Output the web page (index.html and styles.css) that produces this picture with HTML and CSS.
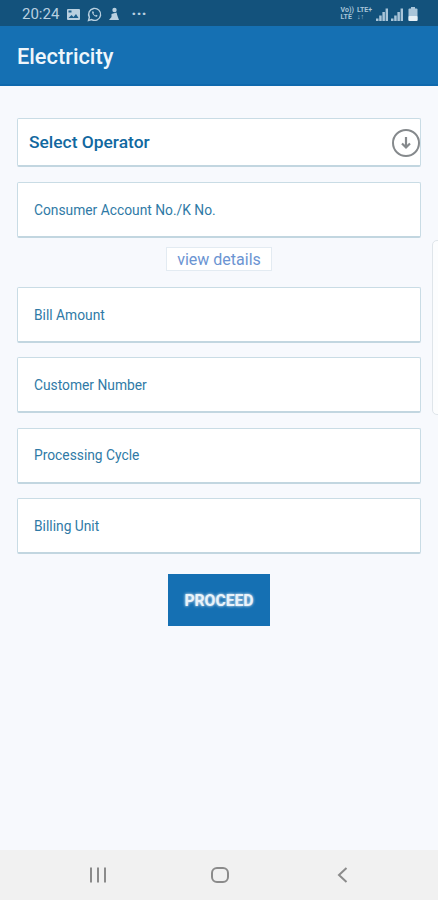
FILE: index.html
```html
<!DOCTYPE html>
<html lang="en">
<head>
    <meta charset="UTF-8">
    <meta name="viewport" content="width=device-width, initial-scale=1.0">
    <title>Electricity</title>
    <link rel="stylesheet" href="styles.css">
</head>
<body>
    <div class="phone">
        <div class="status-bar">
            <div class="status-left">
                <span class="clock">20:24</span>
                <svg class="status-icon" width="13" height="11" viewBox="0 0 13 11">
                    <rect x="0" y="0" width="13" height="11" rx="1" fill="#b9d0e0"/>
                    <path d="M1.500 9 L4.500 6 L6.500 8 L9 5 L11.500 9 Z" fill="#1d5f8c"/>
                    <rect x="1.500" y="1.500" width="3" height="2" fill="#1d5f8c"/>
                </svg>
                <svg class="status-icon" width="15" height="15" viewBox="0 0 15 15">
                    <path d="M1.500 13.500 L2.400 10.300 A6 6 0 1 1 4.700 12.600 Z" fill="none" stroke="#b9d0e0" stroke-width="1.400"/>
                    <path d="M5.200 4.600 C4.400 6.600 7.600 10.200 10 9.800 L10.600 8.600 L9 7.800 L8.300 8.400 C7.400 8 6.800 7.200 6.500 6.400 L7 5.800 L6.200 4.200 Z" fill="#b9d0e0"/>
                </svg>
                <svg class="status-icon" width="10" height="14" viewBox="0 0 10 14">
                    <circle cx="5.500" cy="3" r="2.200" fill="#b9d0e0"/>
                    <path d="M2.500 7 L7.500 5.500 L8.500 9 L10 13 L0 13 L2.500 10 Z" fill="#b9d0e0"/>
                </svg>
                <span class="more-dots">&middot;&middot;&middot;</span>
            </div>
            <div class="status-right">
                <span class="net-label">Vo))<br>LTE</span>
                <span class="net-label net-label-wide">LTE+<br>↓↑</span>
                <svg class="signal" width="12" height="13" viewBox="0 0 12 13">
                    <path d="M0 10.500h2.500V13H0zM3.200 7.500h2.500V13H3.200zM6.400 4h2.500v9H6.400zM9.600 0.500H12V13H9.600z" fill="#a9c5d9"/>
                </svg>
                <svg class="signal" width="12" height="13" viewBox="0 0 12 13">
                    <path d="M0 10.500h2.500V13H0zM3.200 7.500h2.500V13H3.200zM6.400 4h2.500v9H6.400zM9.600 0.500H12V13H9.600z" fill="#a9c5d9"/>
                </svg>
                <svg class="battery" width="10" height="14" viewBox="0 0 10 14">
                    <rect x="3" y="0" width="4" height="2" fill="#a9c5d9"/>
                    <rect x="0.500" y="1.500" width="9" height="12.500" rx="1" fill="#a9c5d9"/>
                    <rect x="0.500" y="9" width="9" height="5" rx="1" fill="#e6f0f6"/>
                </svg>
            </div>
        </div>

        <div class="app-bar">
            <h1>Electricity</h1>
        </div>

        <div class="content">
            <div class="side-tab"></div>

            <div class="field field-select">
                <span>Select Operator</span>
                <svg class="select-icon" width="30" height="30" viewBox="0 0 30 30">
                    <circle cx="15" cy="15" r="13" fill="#fff" stroke="#85898c" stroke-width="2"/>
                    <path d="M15 9v10M11 15.500l4 4 4-4" fill="none" stroke="#85898c" stroke-width="2.200"/>
                </svg>
            </div>

            <div class="field field-account">Consumer Account No./K No.</div>

            <div class="details-row">
                <span class="view-details">view details</span>
            </div>

            <div class="field">Bill Amount</div>
            <div class="field">Customer Number</div>
            <div class="field">Processing Cycle</div>
            <div class="field">Billing Unit</div>

            <button class="proceed-btn">PROCEED</button>
        </div>

        <div class="nav-bar">
            <svg width="18" height="16" viewBox="0 0 18 16">
                <path d="M2 0.500v15M9 0.500v15M16 0.500v15" stroke="#8b8b8b" stroke-width="2" fill="none"/>
            </svg>
            <svg width="18" height="16" viewBox="0 0 18 16">
                <rect x="1" y="1" width="16" height="14" rx="5" fill="none" stroke="#8b8b8b" stroke-width="2"/>
            </svg>
            <svg class="nav-back" width="12" height="16" viewBox="0 0 12 16">
                <path d="M10.500 1 L3 8 L10.500 15" fill="none" stroke="#8b8b8b" stroke-width="2"/>
            </svg>
        </div>
    </div>
</body>
</html>
```

FILE: styles.css
```css
body {
    font-family: Roboto, 'Liberation Sans', Arial, sans-serif;
    margin: 0;
    padding: 0;
    background: #f7f9fd;
}
.phone {
    width: 438px;
    height: 900px;
    display: flex;
    flex-direction: column;
    overflow: hidden;
}
.status-bar {
    height: 26px;
    background: #13527c;
    display: flex;
    justify-content: space-between;
    align-items: center;
    padding: 2px 20px 0 22px;
    color: #b9d0e0;
    box-sizing: border-box;
}
.status-left {
    display: flex;
    align-items: center;
    gap: 7px;
}
.clock {
    font-size: 15px;
    margin-right: 1px;
}
.more-dots {
    font-size: 17px;
    font-weight: 700;
    margin-left: 5px;
    line-height: 1;
}
.status-right {
    display: flex;
    align-items: center;
    gap: 3px;
}
.net-label {
    font-size: 7px;
    line-height: 7px;
    font-weight: 700;
    color: #a9c5d9;
}
.net-label-wide {
    margin-right: 1px;
}
.battery {
    margin-left: 2px;
}
.app-bar {
    height: 60px;
    background: #1570b3;
    border-bottom: 2px solid #0f69ad;
    box-sizing: border-box;
    display: flex;
    align-items: center;
    padding: 2px 0 0 17px;
}
.app-bar h1 {
    margin: 0;
    font-size: 21.800px;
    font-weight: 500;
    color: #eef6fb;
}
.content {
    position: relative;
    flex: 1;
    padding: 32px 17px 0 17px;
    display: flex;
    flex-direction: column;
    align-items: stretch;
}
.side-tab {
    position: absolute;
    right: -6px;
    top: 154px;
    width: 10px;
    height: 173px;
    background: #fcfdfe;
    border: 1px solid #dfe5ea;
    border-radius: 5px;
}
.field {
    height: 56px;
    background: #fff;
    border: 1px solid #c9dce5;
    border-bottom: 2px solid #c2d6e0;
    border-radius: 2px;
    box-sizing: border-box;
    display: flex;
    align-items: center;
    padding-left: 16px;
    margin-bottom: 14.400px;
    font-size: 13.800px;
    color: #2f7aa6;
}
.field-select {
    position: relative;
    height: 49px;
    padding-left: 11px;
    font-size: 17.400px;
    font-weight: 500;
    color: #11689f;
    margin-bottom: 15px;
}
.select-icon {
    position: absolute;
    right: -1px;
    top: 9px;
}
.field-account {
    margin-bottom: 9px;
}
.details-row {
    display: flex;
    justify-content: center;
    margin-bottom: 16px;
}
.view-details {
    display: block;
    width: 106px;
    height: 24px;
    line-height: 23px;
    text-align: center;
    box-sizing: border-box;
    background: #fff;
    border: 1px solid #e3ebf2;
    font-size: 16px;
    color: #6b94d2;
}
.proceed-btn {
    align-self: center;
    width: 102px;
    height: 52px;
    margin-top: 5.400px;
    padding-top: 3px;
    background: #1570b3;
    border: none;
    color: #e9f3fa;
    font-family: inherit;
    font-size: 15.700px;
    font-weight: 700;
    text-shadow: 0 0 3px #ffffff;
}
.nav-bar {
    height: 50px;
    background: #f1f1f1;
    display: flex;
    align-items: center;
    gap: 104px;
    padding-left: 89px;
}
.nav-back {
    margin-left: 3px;
}
```
